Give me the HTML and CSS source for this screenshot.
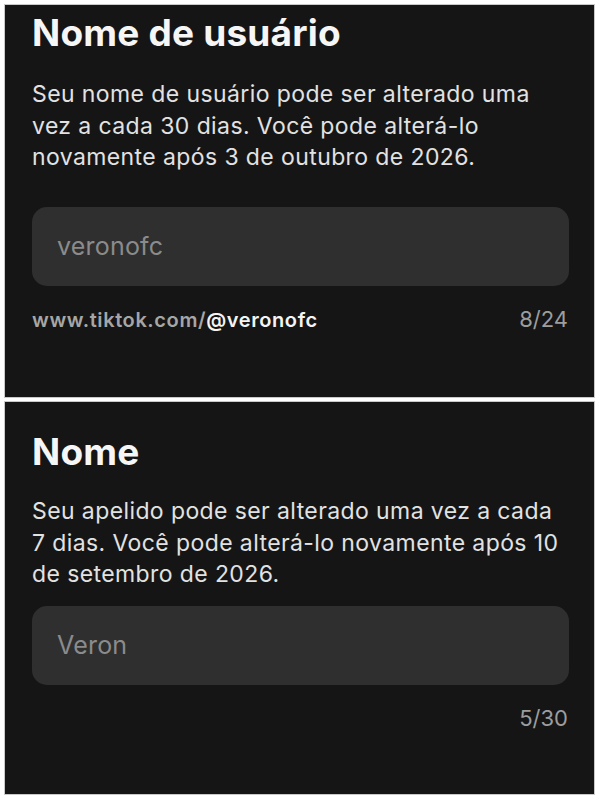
FILE: index.html
```html
<!DOCTYPE html>
<html lang="pt-BR">
<head>
<meta charset="utf-8">
<title>Nome de usuário</title>
<link rel="stylesheet" href="styles.css">
</head>
<body>
  <section class="panel panel-username">
    <h1 class="title">Nome de usuário</h1>
    <p class="desc">Seu nome de usuário pode ser alterado uma<br>vez a cada 30 dias. Você pode alterá-lo<br>novamente após 3 de outubro de 2026.</p>
    <div class="field"><span class="field-text">veronofc</span></div>
    <div class="meta">
      <span class="url"><span class="url-base">www.tiktok.com/</span><span class="url-handle">@veronofc</span></span>
      <span class="count">8/24</span>
    </div>
  </section>
  <section class="panel panel-name">
    <h1 class="title">Nome</h1>
    <p class="desc">Seu apelido pode ser alterado uma vez a cada<br>7 dias. Você pode alterá-lo novamente após 10<br>de setembro de 2026.</p>
    <div class="field"><span class="field-text">Veron</span></div>
    <div class="meta meta-end">
      <span class="count">5/30</span>
    </div>
  </section>
</body>
</html>
```
FILE: styles.css
```css
html, body {
  margin: 0;
  padding: 0;
}
body {
  background: #ffffff;
  padding: 5px 6px 6px 5px;
  display: flex;
  flex-direction: column;
  gap: 5px;
  font-family: Inter, "Noto Sans", "Liberation Sans", sans-serif;
  width: 600px;
  box-sizing: border-box;
}
.panel {
  height: 392px;
  background: #151515;
  box-shadow: 0 0 0 1px #c9c9c9;
  box-sizing: border-box;
  padding: 0 25px 0 27px;
  display: flex;
  flex-direction: column;
}
.title {
  margin: 0;
  font-size: 37px;
  line-height: 40px;
  font-weight: 700;
  color: #f6f6f6;
  letter-spacing: 0.2px;
}
.desc {
  margin: 0;
  font-size: 23px;
  line-height: 31.5px;
  letter-spacing: 0.4px;
  color: #e2e2e2;
  font-weight: 400;
}
.panel-username .title {
  padding-top: 8px;
}
.panel-username .desc {
  margin-top: 26px;
}
.panel-username .field {
  margin-top: 33px;
}
.panel-name .title {
  padding-top: 30px;
}
.panel-name .desc {
  margin-top: 24px;
}
.panel-name .field {
  margin-top: 15px;
}
.field {
  height: 79px;
  border-radius: 15px;
  background: #2f2f2f;
  display: flex;
  align-items: center;
  padding-left: 25px;
}
.field-text {
  font-size: 25px;
  color: #8b8b8b;
  letter-spacing: 0.2px;
}
.meta {
  margin-top: 21px;
  display: flex;
  justify-content: space-between;
  align-items: baseline;
  line-height: 24px;
}
.meta-end {
  justify-content: flex-end;
}
.url {
  font-size: 20px;
  font-weight: 600;
  letter-spacing: 0.6px;
}
.url-base {
  color: #a6a6a6;
}
.url-handle {
  color: #f4f4f4;
}
.count {
  font-size: 22px;
  color: #9d9d9d;
  padding-right: 1px;
}
```
